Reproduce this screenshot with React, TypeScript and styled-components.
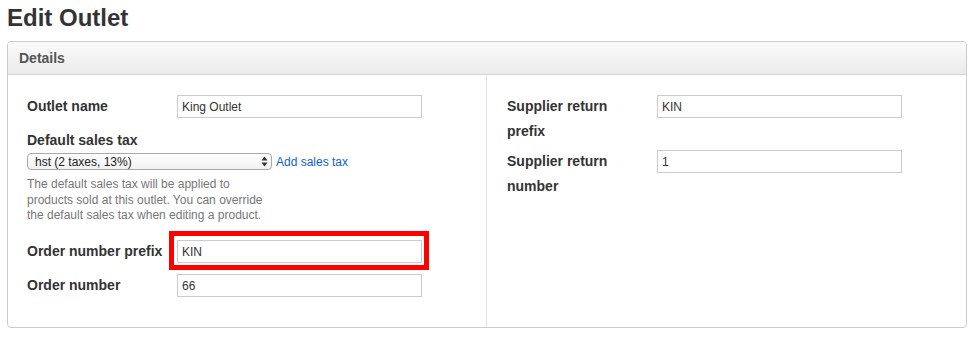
import React from "react";
import styled, { createGlobalStyle } from "styled-components";

const GlobalStyle = createGlobalStyle`
  body {
    margin: 0;
    background: #fff;
    font-family: "Liberation Sans", Arial, Helvetica, sans-serif;
    color: #333;
  }
`;

const Page = styled.div`
  padding: 0 11px 0 7px;
`;

const Title = styled.h1`
  margin: 0 0 9px;
  padding-top: 4px;
  font-size: 24px;
  line-height: 28px;
  font-weight: bold;
  color: #333;
`;

const Panel = styled.section`
  width: 960px;
  box-sizing: border-box;
  border: 1px solid #ccc;
  border-radius: 4px;
  overflow: hidden;
`;

const PanelHeader = styled.div`
  height: 32px;
  padding-left: 11px;
  display: flex;
  align-items: center;
  font-size: 14px;
  font-weight: bold;
  color: #555;
  background: linear-gradient(#fafafa, #ebebeb);
  border-bottom: 1px solid #d4d4d4;
`;

const PanelBody = styled.div`
  display: grid;
  grid-template-columns: 478px 1fr;
`;

const Column = styled.div<{ $divider?: boolean }>`
  padding: 20px 20px 19px ${(p) => (p.$divider ? "20px" : "19px")};
  border-left: ${(p) => (p.$divider ? "1px solid #e3e3e3" : "none")};
`;

const FieldRow = styled.div`
  display: grid;
  grid-template-columns: 150px 1fr;
  align-items: start;
  margin-bottom: 11px;
`;

const Label = styled.label`
  display: block;
  width: 140px;
  margin: -1px 0 -5px;
  font-size: 14px;
  line-height: 25px;
  font-weight: bold;
  color: #333;
`;

const InputWrap = styled.div`
  position: relative;
  width: 245px;
`;

const TextInput = styled.input`
  display: block;
  width: 245px;
  height: 23px;
  box-sizing: border-box;
  margin: 0;
  padding: 0 4px;
  border: 1px solid #ccc;
  font-family: "Liberation Sans", Arial, sans-serif;
  font-size: 12px;
  color: #333;
  outline: none;
`;

const Highlight = styled.span`
  position: absolute;
  top: -9px;
  left: -8px;
  right: -7px;
  bottom: -7px;
  border: 5px solid #f00;
  pointer-events: none;
`;

const TaxBlock = styled.div`
  margin-bottom: 16px;
`;

const SelectLine = styled.div`
  display: flex;
  align-items: center;
  margin-top: 5px;
`;

const SelectBox = styled.div`
  display: flex;
  align-items: center;
  justify-content: space-between;
  width: 245px;
  height: 17px;
  box-sizing: border-box;
  padding: 0 3px 0 7px;
  border: 1px solid #a9a9a9;
  border-radius: 4px;
  background: linear-gradient(#fff, #f1f1f1);
  font-size: 12px;
  color: #222;
  cursor: default;
`;

const AddLink = styled.a`
  margin-left: 4px;
  font-size: 12px;
  color: #0f62c9;
  text-decoration: none;
`;

const Help = styled.p`
  width: 250px;
  margin: 7px 0 0;
  font-size: 12px;
  line-height: 15.7px;
  color: #777;
`;

type FieldProps = {
  label: string;
  value: string;
  highlighted?: boolean;
};

const Field = ({ label, value, highlighted }: FieldProps) => (
  <FieldRow>
    <Label>{label}</Label>
    <InputWrap>
      <TextInput defaultValue={value} />
      {highlighted && <Highlight />}
    </InputWrap>
  </FieldRow>
);

export default function App() {
  return (
    <Page>
      <GlobalStyle />
      <Title>Edit Outlet</Title>
      <Panel>
        <PanelHeader>Details</PanelHeader>
        <PanelBody>
          <Column>
            <Field label="Outlet name" value="King Outlet" />
            <TaxBlock>
              <Label>Default sales tax</Label>
              <SelectLine>
                <SelectBox role="combobox">
                  <span>hst (2 taxes, 13%)</span>
                  <svg width="7" height="11" viewBox="0 0 7 11">
                    <path d="M3.5 0.5 L6.5 4.5 H0.5 Z" fill="#333" />
                    <path d="M3.5 10.5 L6.5 6.5 H0.5 Z" fill="#333" />
                  </svg>
                </SelectBox>
                <AddLink href="#">Add sales tax</AddLink>
              </SelectLine>
              <Help>
                The default sales tax will be applied to products sold at this
                outlet. You can override the default sales tax when editing a
                product.
              </Help>
            </TaxBlock>
            <Field label="Order number prefix" value="KIN" highlighted />
            <Field label="Order number" value="66" />
          </Column>
          <Column $divider>
            <Field label="Supplier return prefix" value="KIN" />
            <Field label="Supplier return number" value="1" />
          </Column>
        </PanelBody>
      </Panel>
    </Page>
  );
}
